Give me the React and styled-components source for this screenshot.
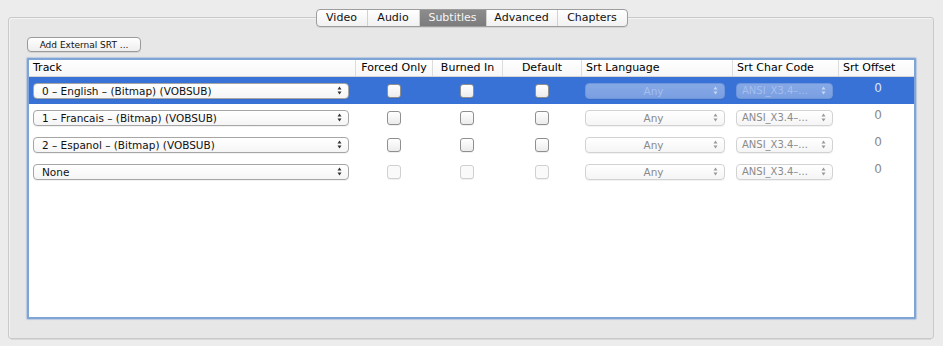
import React from 'react';
import styled, { createGlobalStyle } from 'styled-components';

const GlobalStyle = createGlobalStyle`
  html, body {
    margin: 0;
    padding: 0;
    background: #ececec;
    font-family: "DejaVu Sans", "Liberation Sans", sans-serif;
    font-size: 11px;
    color: #000;
  }
`;

const Page = styled.div`
  width: 943px;
  height: 346px;
  padding: 17px 9px 0 8px;
  box-sizing: border-box;
`;

const TabBox = styled.div`
  height: 320px;
  border: 1px solid #c9c9c9;
  border-radius: 3px;
  background: #e7e7e7;
  box-shadow: inset 1px 1px 0 #f3f3f3, 0 4px 0 -3px #d9d9d9;
  display: flex;
  flex-direction: column;
  padding: 0 17px 0 18px;
`;

const TabBar = styled.div`
  display: flex;
  align-self: center;
  margin-top: -9px;
  border: 1px solid #9d9d9d;
  border-radius: 4px;
  background: linear-gradient(#ffffff, #f1f1f1);
  box-shadow: 0 1px 0 rgba(0, 0, 0, 0.08);
  overflow: hidden;
`;

const Tab = styled.div`
  width: ${(p) => p.$w}px;
  height: 16px;
  line-height: 16px;
  text-align: center;
  font-size: 11px;
  color: ${(p) => (p.$active ? '#f6f6f6' : '#111')};
  background: ${(p) => (p.$active ? 'linear-gradient(#8c8c8c, #7c7c7c)' : 'transparent')};
  border-left: 1px solid #d2d2d2;
  &:first-child { border-left: none; }
`;

const SmallButton = styled.button`
  align-self: flex-start;
  margin-top: 10px;
  height: 15px;
  width: 114px;
  padding: 0;
  font-family: inherit;
  font-size: 9px;
  color: #111;
  border: 1px solid #9a9a9a;
  border-radius: 4px;
  background: linear-gradient(#ffffff, #eeeeee);
  box-shadow: 0 1px 0 rgba(0, 0, 0, 0.08);
`;

const Table = styled.div`
  margin-top: 6px;
  height: 257px;
  border: 2px solid #7ea5d6;
  border-radius: 1px;
  background: #fff;
  box-shadow: 0 0 1px 1px rgba(126, 165, 214, 0.45);
  overflow: hidden;
`;

const cols = '326px 77px 70px 79px 151px 106px 1fr';

const HeaderRow = styled.div`
  display: grid;
  grid-template-columns: ${cols};
  height: 16px;
  border-bottom: 1px solid #d5d5d5;
  background: linear-gradient(#ffffff, #f7f7f7);
`;

const HeaderCell = styled.div`
  line-height: 16px;
  font-size: 11px;
  padding-left: ${(p) => (p.$center ? 0 : 4)}px;
  text-align: ${(p) => (p.$center ? 'center' : 'left')};
  border-left: ${(p) => (p.$first ? 'none' : '1px solid #dcdcdc')};
  white-space: nowrap;
`;

const Row = styled.div`
  display: grid;
  grid-template-columns: ${cols};
  height: 27px;
  align-items: center;
  background: ${(p) => (p.$selected ? '#3872d6' : '#fff')};
`;

const Cell = styled.div`
  display: flex;
  justify-content: center;
  align-items: center;
  padding: ${(p) => p.$pad || '0'};
`;

const Popup = styled.div`
  flex: 1;
  height: 16px;
  display: flex;
  align-items: center;
  box-sizing: border-box;
  padding: 0 6px 0 ${(p) => p.$left || 8}px;
  border: 1px solid ${(p) => (p.$tone === 'selDisabled' ? '#6e96dc' : p.$disabled ? '#d2d2d2' : '#a6a6a6')};
  border-radius: 4px;
  background: ${(p) =>
    p.$tone === 'selDisabled'
      ? 'linear-gradient(#86a8e6, #7a9fe1)'
      : 'linear-gradient(#ffffff, #f5f5f5)'};
  color: ${(p) => (p.$tone === 'selDisabled' ? '#a4bfee' : p.$disabled ? '#8a8a8a' : '#111')};
  font-size: ${(p) => p.$size || 10.5}px;
  box-shadow: 0 1px 0 rgba(0, 0, 0, 0.05);
`;

const PopupLabel = styled.span`
  flex: 1;
  line-height: 14px;
  text-align: ${(p) => (p.$center ? 'center' : 'left')};
  white-space: nowrap;
`;

const Checkbox = styled.div`
  width: 12px;
  height: 12px;
  border: 1px solid ${(p) => (p.$disabled ? '#d0d0d0' : '#8f8f8f')};
  border-radius: 3px;
  background: ${(p) => (p.$disabled ? '#fafafa' : 'linear-gradient(#ffffff, #ececec)')};
  box-shadow: 0 1px 0 rgba(0, 0, 0, 0.06);
  margin-top: 1px;
`;

const Offset = styled.div`
  flex: 1;
  text-align: center;
  font-size: 12px;
  margin-top: -6px;
  margin-left: 4px;
  color: ${(p) => (p.$selected ? '#dce6f7' : '#8a8a8a')};
`;

const Arrows = ({ color = '#444' }) => (
  <svg width="5" height="9" viewBox="0 0 5 9">
    <path d="M2.5 0.5 L4.5 3.5 L0.5 3.5 Z M2.5 8.5 L4.5 5.5 L0.5 5.5 Z" fill={color} />
  </svg>
);

const tracks = [
  { name: '0 – English – (Bitmap) (VOBSUB)', selected: true },
  { name: '1 – Francais – (Bitmap) (VOBSUB)' },
  { name: '2 – Espanol – (Bitmap) (VOBSUB)' },
  { name: 'None', empty: true },
];

const tabs = [
  { label: 'Video', w: 50 },
  { label: 'Audio', w: 51 },
  { label: 'Subtitles', w: 66 },
  { label: 'Advanced', w: 70 },
  { label: 'Chapters', w: 69 },
];

const TrackRow = ({ track }) => {
  const sel = track.selected;
  const dimTone = sel ? 'selDisabled' : undefined;
  return (
    <Row $selected={sel}>
      <Cell $pad="0 6px 0 4px">
        <Popup>
          <PopupLabel>{track.name}</PopupLabel>
          <Arrows color="#333" />
        </Popup>
      </Cell>
      <Cell><Checkbox $disabled={track.empty} /></Cell>
      <Cell><Checkbox $disabled={track.empty} /></Cell>
      <Cell><Checkbox $disabled={track.empty} /></Cell>
      <Cell $pad="0 7px 0 4px">
        <Popup $disabled $tone={dimTone}>
          <PopupLabel $center>Any</PopupLabel>
          <Arrows color={sel ? '#c8d8f4' : '#9a9a9a'} />
        </Popup>
      </Cell>
      <Cell $pad="0 5px 0 4px">
        <Popup $disabled $tone={dimTone} $left={5} $size={10}>
          <PopupLabel>ANSI_X3.4–...</PopupLabel>
          <Arrows color={sel ? '#c8d8f4' : '#9a9a9a'} />
        </Popup>
      </Cell>
      <Cell>
        <Offset $selected={sel}>0</Offset>
      </Cell>
    </Row>
  );
};

export default function App() {
  return (
    <Page>
      <GlobalStyle />
      <TabBox>
        <TabBar>
          {tabs.map((t) => (
            <Tab key={t.label} $w={t.w} $active={t.label === 'Subtitles'}>
              {t.label}
            </Tab>
          ))}
        </TabBar>
        <SmallButton>Add External SRT ...</SmallButton>
        <Table>
          <HeaderRow>
            <HeaderCell $first>Track</HeaderCell>
            <HeaderCell $center>Forced Only</HeaderCell>
            <HeaderCell $center>Burned In</HeaderCell>
            <HeaderCell $center>Default</HeaderCell>
            <HeaderCell>Srt Language</HeaderCell>
            <HeaderCell>Srt Char Code</HeaderCell>
            <HeaderCell>Srt Offset</HeaderCell>
          </HeaderRow>
          {tracks.map((t) => (
            <TrackRow key={t.name} track={t} />
          ))}
        </Table>
      </TabBox>
    </Page>
  );
}
